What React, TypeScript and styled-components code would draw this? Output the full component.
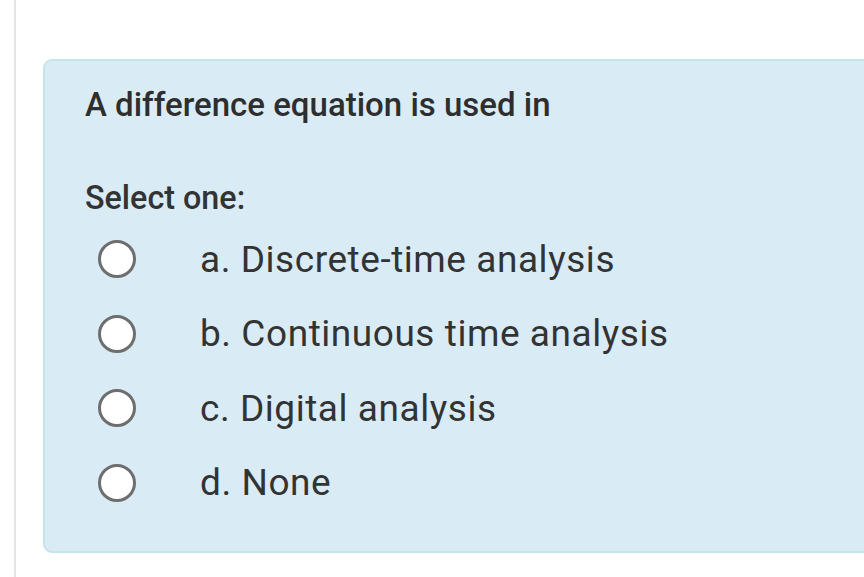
import React from "react";
import styled, { createGlobalStyle } from "styled-components";

const Global = createGlobalStyle`
  html, body { margin: 0; padding: 0; background: #ffffff; }
  body { font-family: Roboto, "Liberation Sans", sans-serif; color: #333333; }
`;

const Page = styled.div`
  width: 864px;
  height: 577px;
  overflow: hidden;
  display: flex;
  box-sizing: border-box;
  padding-left: 14px;
`;

const SideRule = styled.div`
  width: 2px;
  flex: none;
  background: #e3e3e3;
`;

const Content = styled.div`
  flex: 1;
  padding: 59px 0 0 27px;
  min-width: 0;
`;

const Panel = styled.div`
  width: 900px;
  height: 494px;
  box-sizing: border-box;
  background: #d9ecf6;
  border: 2px solid #c4e5ec;
  border-radius: 9px;
  padding: 24px 0 0 40px;
`;

const Question = styled.div`
  font-size: 33px;
  font-weight: 500;
  line-height: 40px;
  color: #2e2e2e;
  height: 80px;
`;

const Prompt = styled.div`
  font-size: 32.3px;
  font-weight: 500;
  line-height: 40px;
  color: #333;
  margin-top: 13px;
`;

const Options = styled.div`
  display: flex;
  flex-direction: column;
  margin-top: 4px;
`;

const Option = styled.label`
  display: flex;
  align-items: center;
  height: 74.5px;
`;

const Radio = styled.span`
  width: 38px;
  height: 38px;
  box-sizing: border-box;
  border-radius: 50%;
  border: 3px solid #6e6e6e;
  background: #ffffff;
  margin-left: 13px;
  flex: none;
`;

const OptionText = styled.span`
  font-size: 37px;
  letter-spacing: 0.55px;
  color: #333;
  margin-left: 64px;
`;

const options = [
  "a. Discrete-time analysis",
  "b. Continuous time analysis",
  "c. Digital analysis",
  "d. None",
];

export default function App() {
  return (
    <>
      <Global />
      <Page>
        <SideRule />
        <Content>
          <Panel>
            <Question>A difference equation is used in</Question>
            <Prompt>Select one:</Prompt>
            <Options>
              {options.map((o) => (
                <Option key={o}>
                  <Radio />
                  <OptionText>{o}</OptionText>
                </Option>
              ))}
            </Options>
          </Panel>
        </Content>
      </Page>
    </>
  );
}
